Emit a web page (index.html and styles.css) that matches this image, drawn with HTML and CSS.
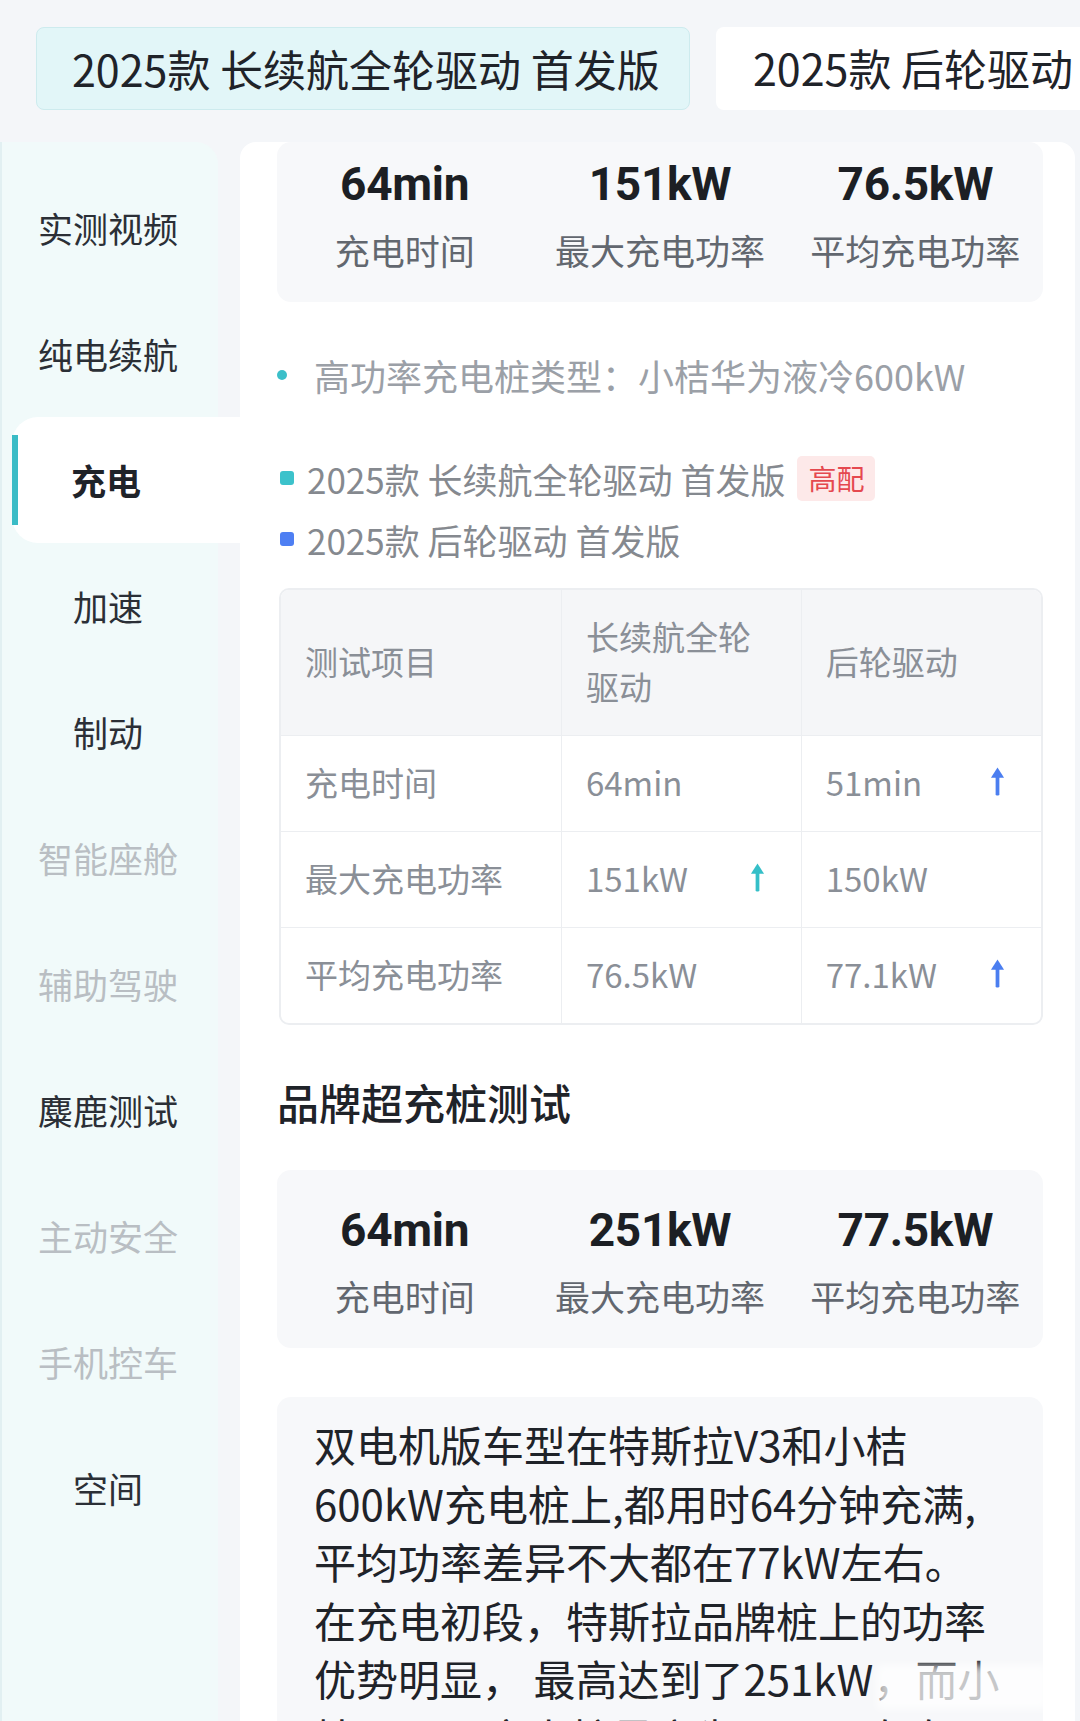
FILE: index.html
```html
<!DOCTYPE html>
<html lang="zh-CN">
<head>
  <meta charset="UTF-8">
  <title>充电测试</title>
  <meta name="viewport" content="width=device-width,initial-scale=1">
  <link rel="stylesheet" href="styles.css">
</head>
<body>
  <div class="tabs">
    <div class="tab active">2025款 长续航全轮驱动 首发版</div>
    <div class="tab">2025款 后轮驱动</div>
  </div>

  <div class="main">
    <ul class="side">
      <li>实测视频</li>
      <li>纯电续航</li>
      <li class="on">充电</li>
      <li>加速</li>
      <li>制动</li>
      <li class="off">智能座舱</li>
      <li class="off">辅助驾驶</li>
      <li>麋鹿测试</li>
      <li class="off">主动安全</li>
      <li class="off">手机控车</li>
      <li>空间</li>
    </ul>

    <div class="panel">
      <div class="stats first">
        <div class="stat"><b>64min</b><span>充电时间</span></div>
        <div class="stat"><b>151kW</b><span>最大充电功率</span></div>
        <div class="stat"><b>76.5kW</b><span>平均充电功率</span></div>
      </div>

      <p class="note"><i></i>高功率充电桩类型：小桔华为液冷600kW</p>

      <div class="legend">
        <div class="lg"><i class="c1"></i>2025款 长续航全轮驱动 首发版<em>高配</em></div>
        <div class="lg"><i class="c2"></i>2025款 后轮驱动 首发版</div>
      </div>

      <div class="tbl">
        <table>
          <colgroup><col class="k"><col><col></colgroup>
          <tr class="hd">
            <th>测试项目</th>
            <th>长续航全轮驱动</th>
            <th>后轮驱动</th>
          </tr>
          <tr>
            <td>充电时间</td>
            <td><div class="cell">64min</div></td>
            <td><div class="cell">51min
              <svg class="up" viewBox="0 0 16 30"><path d="M8 0L1 11h14z" fill="#4b7ef0"/><rect x="6" y="9" width="4" height="21" rx="1.5" fill="#4b7ef0"/></svg></div></td>
          </tr>
          <tr>
            <td>最大充电功率</td>
            <td><div class="cell">151kW
              <svg class="up" viewBox="0 0 16 30"><path d="M8 0L1 11h14z" fill="#35bfc8"/><rect x="6" y="9" width="4" height="21" rx="1.5" fill="#35bfc8"/></svg></div></td>
            <td><div class="cell">150kW</div></td>
          </tr>
          <tr>
            <td>平均充电功率</td>
            <td><div class="cell">76.5kW</div></td>
            <td><div class="cell">77.1kW
              <svg class="up" viewBox="0 0 16 30"><path d="M8 0L1 11h14z" fill="#4b7ef0"/><rect x="6" y="9" width="4" height="21" rx="1.5" fill="#4b7ef0"/></svg></div></td>
          </tr>
        </table>
      </div>

      <h2>品牌超充桩测试</h2>

      <div class="stats">
        <div class="stat"><b>64min</b><span>充电时间</span></div>
        <div class="stat"><b>251kW</b><span>最大充电功率</span></div>
        <div class="stat"><b>77.5kW</b><span>平均充电功率</span></div>
      </div>

      <div class="desc">
        双电机版车型在特斯拉V3和小桔600kW充电桩上,都用时64分钟充满,平均功率差异不大都在77kW左右。<br>
        在充电初段，特斯拉品牌桩上的功率优势明显， 最高达到了251kW，而小桔600kW充电桩最高为180kW左右。
        <div class="wm"></div>
      </div>
    </div>
  </div>
</body>
</html>
```

FILE: styles.css
```css
body{margin:0;width:1080px;height:1721px;overflow:hidden;background:#f4f6f9;color:#1f2329;font-family:"Noto Sans CJK SC","Noto Sans",sans-serif}
ul{list-style:none;margin:0;padding:0}

.tabs{display:flex;gap:26px;padding:27px 0 0 36px;white-space:nowrap}
.tab{flex:none;height:83px;line-height:81px;padding:0 37px;border-radius:8px 0 0 8px;background:#fff;font-size:43px;box-sizing:border-box;width:400px}
.tab.active{width:654px;background:#e2f6f8;border:1px solid #cdebee;border-radius:8px;padding:0 35px}

.main{display:flex;margin-top:32px}
.side{flex:none;width:218px;background:#f1fafa;border-left:2px solid #e2f0f2;box-sizing:border-box;border-radius:0 22px 0 0;padding-top:23px;min-height:1600px}
.side li{height:126px;line-height:126px;text-align:center;font-size:35px;color:#2b2f36;padding-right:4px}
.side li.off{color:#b9bec3}
.side li.on{position:relative;background:#fff;margin:0 -22px 0 10px;padding-right:40px;border-radius:26px 0 0 26px;font-weight:700;color:#1f2329}
.side li.on::before{content:"";position:absolute;left:0;top:18px;bottom:18px;width:6px;background:#3bbcc6}

.panel{flex:1;margin:0 5px 0 22px;background:#fff;border-radius:16px 16px 0 0;padding:0 32px 0 37px}

.stats{display:grid;grid-template-columns:repeat(3,1fr);background:#f7f8fa;border-radius:14px;padding:34px 0 28px}
.stats.first{padding-top:16px}
.stat{display:flex;flex-direction:column;align-items:center;gap:16px}
.stat b{font-family:Roboto,"Noto Sans",sans-serif;font-weight:700;font-size:46px;line-height:52px;letter-spacing:-0.3px;color:#1c1f24}
.stat span{font-size:35px;line-height:48px;color:#62676f}

.note{margin:48px 0 0;display:flex;align-items:center;font-size:36px;line-height:50px;color:#9ba0a7}
.note i{width:10px;height:10px;border-radius:50%;background:#3bbfc9;margin-right:27px}

.legend{margin-top:50px;display:flex;flex-direction:column;gap:5px}
.lg{display:flex;align-items:center;height:56px;font-size:35px;color:#85898f}
.lg i{width:14px;height:14px;border-radius:3px;margin:0 13px 0 3px}
.lg i.c1{background:#3cc2cb}
.lg i.c2{background:#4e7ff3}
.lg em{font-style:normal;margin-left:12px;padding:0 11px;height:45px;line-height:45px;border-radius:5px;background:#fde9e9;color:#e5484f;font-size:28px}

.tbl{margin:21px 0 0 2px;border:2px solid #eceef1;border-radius:10px;overflow:hidden}
table{width:100%;border-collapse:collapse;table-layout:fixed;font-size:33px;color:#8a8f97}
col.k{width:36.9%}
th,td{text-align:left;font-weight:400;padding:0 0 4px 24px;border-left:1px solid #eceef1;border-top:1px solid #eceef1;line-height:50px}
th:first-child,td:first-child{border-left:none}
tr.hd th{height:141px;background:#f5f6f8;border-top:none;padding-right:24px}
td{height:91px}
.cell{display:flex;align-items:center;justify-content:space-between;padding-right:36px}
.up{width:15px;height:29px}

h2{margin:49px 0 40px;font-size:42px;line-height:56px;font-weight:500;color:#1f2329}

.desc{position:relative;margin-top:49px;background:#f7f8fa;border-radius:14px;padding:18px 30px 0 37px;font-size:42px;line-height:58.5px;color:#1f2329;height:400px}
.wm{position:absolute;left:600px;top:268px;width:170px;height:44px;background:rgba(255,255,255,.75);filter:blur(4px)}
```
